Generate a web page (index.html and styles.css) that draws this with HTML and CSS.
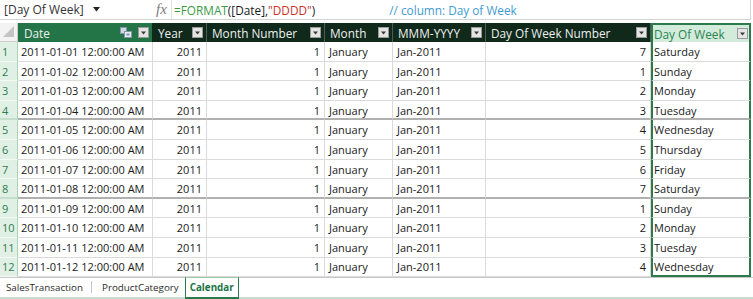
FILE: index.html
```html
<!DOCTYPE html>
<html>
<head>
<meta charset="utf-8">
<link rel="stylesheet" href="styles.css">
</head>
<body>
<div class="fbar">
  <div class="namebox">
    <span class="nb-text">[Day Of Week]</span>
    <svg class="nb-arrow" width="7" height="5" viewBox="0 0 7 5"><path d="M0 0h7L3.5 4.5z" fill="#222"/></svg>
  </div>
  <div class="fx">fx</div>
  <div class="formula">
    <span class="f-green">=FORMAT</span><span>([Date],</span><span class="f-red">"DDDD"</span><span>)</span>
    <span class="f-comment">// column: Day of Week</span>
  </div>
</div>

<div class="grid">
  <div class="corner"><svg width="11" height="11" viewBox="0 0 11 11"><path d="M11 0V11H0z" fill="#c4c4c4"/></svg></div>
  <div class="hd hd-date"><span>Date</span><span class="hd-icons"><svg class="rel" width="12" height="11" viewBox="0 0 12 11"><rect x=".5" y=".5" width="6" height="6" fill="#cfd9e4" stroke="#8396ab"/><rect x="4.5" y="4.5" width="7" height="6" fill="#e6edf4" stroke="#8396ab"/><rect x="6.5" y="6.5" width="3" height="2" fill="#8396ab"/></svg><svg class="dd" width="11" height="11" viewBox="0 0 11 11"><rect x=".5" y=".5" width="10" height="10" fill="#e4e4e4" stroke="#9a9a9a"/><path d="M3 4.5h5l-2.5 3z" fill="#3a3a3a"/></svg></span></div>
  <div class="hd"><span>Year</span><svg class="dd" width="11" height="11" viewBox="0 0 11 11"><rect x=".5" y=".5" width="10" height="10" fill="#e4e4e4" stroke="#9a9a9a"/><path d="M3 4.5h5l-2.5 3z" fill="#3a3a3a"/></svg></div>
  <div class="hd"><span>Month Number</span><svg class="dd" width="11" height="11" viewBox="0 0 11 11"><rect x=".5" y=".5" width="10" height="10" fill="#e4e4e4" stroke="#9a9a9a"/><path d="M3 4.5h5l-2.5 3z" fill="#3a3a3a"/></svg></div>
  <div class="hd"><span>Month</span><svg class="dd" width="11" height="11" viewBox="0 0 11 11"><rect x=".5" y=".5" width="10" height="10" fill="#e4e4e4" stroke="#9a9a9a"/><path d="M3 4.5h5l-2.5 3z" fill="#3a3a3a"/></svg></div>
  <div class="hd"><span>MMM-YYYY</span><svg class="dd" width="11" height="11" viewBox="0 0 11 11"><rect x=".5" y=".5" width="10" height="10" fill="#e4e4e4" stroke="#9a9a9a"/><path d="M3 4.5h5l-2.5 3z" fill="#3a3a3a"/></svg></div>
  <div class="hd"><span>Day Of Week Number</span><svg class="dd" width="11" height="11" viewBox="0 0 11 11"><rect x=".5" y=".5" width="10" height="10" fill="#e4e4e4" stroke="#9a9a9a"/><path d="M3 4.5h5l-2.5 3z" fill="#3a3a3a"/></svg></div>
  <div class="hd hd-sel"><span>Day Of Week</span><svg class="dd" width="11" height="11" viewBox="0 0 11 11"><rect x=".5" y=".5" width="10" height="10" fill="#e4e4e4" stroke="#9a9a9a"/><path d="M3 4.5h5l-2.5 3z" fill="#3a3a3a"/></svg></div>

  <div class="rn">1</div><div class="c c-date">2011-01-01 12:00:00 AM</div><div class="c num">2011</div><div class="c num">1</div><div class="c">January</div><div class="c">Jan-2011</div><div class="c num">7</div><div class="c sel">Saturday</div>
  <div class="rn">2</div><div class="c c-date">2011-01-02 12:00:00 AM</div><div class="c num">2011</div><div class="c num">1</div><div class="c">January</div><div class="c">Jan-2011</div><div class="c num">1</div><div class="c sel">Sunday</div>
  <div class="rn">3</div><div class="c c-date">2011-01-03 12:00:00 AM</div><div class="c num">2011</div><div class="c num">1</div><div class="c">January</div><div class="c">Jan-2011</div><div class="c num">2</div><div class="c sel">Monday</div>
  <div class="rn thick">4</div><div class="c c-date thick">2011-01-04 12:00:00 AM</div><div class="c num thick">2011</div><div class="c num thick">1</div><div class="c thick">January</div><div class="c thick">Jan-2011</div><div class="c num thick">3</div><div class="c sel thick">Tuesday</div>
  <div class="rn">5</div><div class="c c-date">2011-01-05 12:00:00 AM</div><div class="c num">2011</div><div class="c num">1</div><div class="c">January</div><div class="c">Jan-2011</div><div class="c num">4</div><div class="c sel">Wednesday</div>
  <div class="rn">6</div><div class="c c-date">2011-01-06 12:00:00 AM</div><div class="c num">2011</div><div class="c num">1</div><div class="c">January</div><div class="c">Jan-2011</div><div class="c num">5</div><div class="c sel">Thursday</div>
  <div class="rn">7</div><div class="c c-date">2011-01-07 12:00:00 AM</div><div class="c num">2011</div><div class="c num">1</div><div class="c">January</div><div class="c">Jan-2011</div><div class="c num">6</div><div class="c sel">Friday</div>
  <div class="rn thick">8</div><div class="c c-date thick">2011-01-08 12:00:00 AM</div><div class="c num thick">2011</div><div class="c num thick">1</div><div class="c thick">January</div><div class="c thick">Jan-2011</div><div class="c num thick">7</div><div class="c sel thick">Saturday</div>
  <div class="rn">9</div><div class="c c-date">2011-01-09 12:00:00 AM</div><div class="c num">2011</div><div class="c num">1</div><div class="c">January</div><div class="c">Jan-2011</div><div class="c num">1</div><div class="c sel">Sunday</div>
  <div class="rn">10</div><div class="c c-date">2011-01-10 12:00:00 AM</div><div class="c num">2011</div><div class="c num">1</div><div class="c">January</div><div class="c">Jan-2011</div><div class="c num">2</div><div class="c sel">Monday</div>
  <div class="rn">11</div><div class="c c-date">2011-01-11 12:00:00 AM</div><div class="c num">2011</div><div class="c num">1</div><div class="c">January</div><div class="c">Jan-2011</div><div class="c num">3</div><div class="c sel">Tuesday</div>
  <div class="rn last">12</div><div class="c c-date last">2011-01-12 12:00:00 AM</div><div class="c num last">2011</div><div class="c num last">1</div><div class="c last">January</div><div class="c last">Jan-2011</div><div class="c num last">4</div><div class="c sel last sel-last">Wednesday</div>
</div>

<div class="tabs">
  <div class="tab">SalesTransaction</div>
  <div class="tab-sep"></div>
  <div class="tab">ProductCategory</div>
  <div class="tab tab-active">Calendar</div>
</div>
</body>
</html>
```
FILE: styles.css
```css
html, body {
  margin: 0;
  padding: 0;
  background: #ffffff;
}
body {
  width: 753px;
  height: 299px;
  overflow: hidden;
  font-family: "Open Sans", "Noto Sans", sans-serif;
}

/* formula bar */
.fbar {
  display: flex;
  align-items: center;
  height: 19px;
  border-bottom: 1px solid #d4d4d4;
  box-sizing: content-box;
  width: 750px;
  border-right: 1px solid #d4d4d4;
  font-size: 11.8px;
  color: #1a1a1a;
}
.namebox {
  display: flex;
  align-items: center;
  width: 152px;
  padding-left: 4px;
  box-sizing: border-box;
  height: 100%;
}
.nb-text {
  font-size: 12px;
  color: #333;
  white-space: nowrap;
}
.nb-arrow {
  margin-left: 9px;
}
.fx {
  width: 20px;
  height: 100%;
  box-sizing: border-box;
  font-family: "Liberation Serif", serif;
  font-style: italic;
  font-size: 15px;
  color: #7b7b7b;
  line-height: 18px;
  padding-left: 4px;
  border-right: 1px solid #e2e2e2;
}
.formula {
  display: flex;
  align-items: center;
  padding-left: 2px;
  white-space: pre;
}
.f-green { color: #3b9a44; }
.f-red { color: #c8322b; }
.f-comment {
  color: #3f9bd0;
  margin-left: 74px;
}

/* grid */
.grid {
  margin-top: 3px;
  display: grid;
  grid-template-columns: 18px 135px 54px 118px 68px 93px 165px 100px;
  grid-template-rows: 19px repeat(12, 19.6px);
  width: 751px;
  font-size: 11px;
  color: #1a1a1a;
}
.corner {
  background: #f3f3f3;
  border-right: 1px solid #cdcdcd;
  border-bottom: 1px solid #cdcdcd;
  box-sizing: border-box;
  display: flex;
  align-items: flex-end;
  justify-content: flex-end;
  padding: 0 3px 4px 0;
}
.hd {
  box-sizing: border-box;
  background: #10291b;
  color: #efefef;
  font-size: 11.8px;
  display: flex;
  align-items: center;
  justify-content: space-between;
  padding: 0 3px 0 5px;
  border-right: 1px solid #4e5d53;
  white-space: nowrap;
  overflow: hidden;
}
.hd-date {
  background: #237547;
  border-right: 1px solid #0f2a1a;
  padding-left: 6px;
}
.hd-icons {
  display: flex;
  align-items: center;
}
.rel {
  margin-right: 6px;
}
.hd-sel {
  background: #d3ebdb;
  color: #2a8552;
  border: 2px solid #2a7a4c;
  border-bottom: none;
  padding-left: 1px;
  padding-right: 1px;
}
.rn {
  box-sizing: border-box;
  background: #e0f0e5;
  color: #2f7d4e;
  border-right: 1px solid #a9d3b6;
  border-bottom: 1px solid #f3f9f5;
  padding-left: 2px;
  line-height: 19px;
}
.c {
  box-sizing: border-box;
  border-right: 1px solid #dadada;
  border-bottom: 1px solid #dadada;
  padding: 0 4px;
  line-height: 19px;
  white-space: nowrap;
  overflow: hidden;
}
.c-date { padding-left: 3px; }
.num { text-align: right; }
.sel {
  border-left: 2px solid #2a7a4c;
  border-right: 2px solid #2a7a4c;
  padding-left: 1px;
}
.thick {
  border-bottom: 2px solid #b0b0b0;
}
.rn.thick {
  border-bottom: 2px solid #c5dfcd;
}
.sel-last {
  border-bottom: 2px solid #2a7a4c;
}
.last {
  line-height: 18px;
}

/* tabs */
.tabs {
  display: flex;
  align-items: stretch;
  height: 22px;
  box-sizing: border-box;
  border-top: 1px solid #c8c8c8;
  border-bottom: 2px solid #c3dccb;
  font-size: 9.8px;
  color: #2b2b2b;
}
.tab {
  display: flex;
  align-items: center;
  padding: 0 5px 0 6px;
  white-space: nowrap;
}
.tab-sep {
  width: 1px;
  background: #c4c4c4;
  margin: 3px 4px 4px 3px;
}
.tab-active {
  margin-left: 1px;
  margin-top: -1px;
  margin-bottom: -2px;
  padding: 0 4px 0 4px;
  border: 1px solid #2a7a4c;
  border-top: 1px solid #9cc8aa;
  border-bottom: 2px solid #2a7a4c;
  color: #217346;
  font-weight: 700;
  background: #ffffff;
}
```
